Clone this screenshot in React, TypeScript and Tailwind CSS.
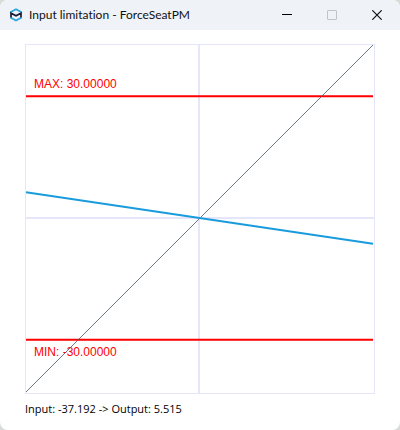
import { useState } from "react"

const LIMIT = 30
const RANGE = LIMIT / 0.7
const CENTER = 174

const toX = (value: number) => CENTER + (value / RANGE) * CENTER
const toY = (value: number) => CENTER - (value / RANGE) * CENTER

function AppLogo() {
  return (
    <svg viewBox="0 0 14 14" className="size-[14px] shrink-0" fill="none" aria-hidden="true">
      <path d="M1.8 4.4V4L7 1.2 12.2 4v.4" stroke="#2aa7df" strokeWidth="1.8" />
      <path d="M1.8 9.4v.4L7 12.6l5.2-2.8v-.4" stroke="#2aa7df" strokeWidth="1.8" />
      <path d="M2 9.6V5.2l5 2.6 5-2.6v4.4" stroke="#1c1c38" strokeWidth="1.7" />
    </svg>
  )
}

interface TitleBarProps {
  title: string
  onClose: () => void
}

function TitleBar({ title, onClose }: TitleBarProps) {
  return (
    <header className="flex h-[30px] items-center bg-[#eff3f8] pl-[9px]">
      <AppLogo />
      <h1 className="ml-1.5 flex-1 truncate font-['Lato',sans-serif] text-[12px] text-[#101010] [font-variant-ligatures:none]">
        {title}
      </h1>
      <button type="button" aria-label="Minimize" className="flex h-full w-[46px] items-center justify-center">
        <svg viewBox="0 0 10 10" className="size-[10px]" shapeRendering="crispEdges">
          <path d="M0 4.5h10" stroke="#000" />
        </svg>
      </button>
      <button type="button" aria-label="Maximize" disabled className="flex h-full w-[44px] items-center justify-center">
        <svg viewBox="0 0 10 10" className="size-[10px]" fill="none">
          <rect x="0.5" y="0.5" width="9" height="9" rx="0.5" stroke="#c0c3c7" />
        </svg>
      </button>
      <button
        type="button"
        aria-label="Close"
        onClick={onClose}
        className="flex h-full w-[46px] items-center justify-center"
      >
        <svg viewBox="0 0 10 10" className="size-[10px]">
          <path d="M0.3 0.3l9.4 9.4M9.7 0.3L0.3 9.7" stroke="#111" strokeWidth="1.2" />
        </svg>
      </button>
    </header>
  )
}

interface LimitChartProps {
  input: number
  output: number
}

function LimitChart({ input, output }: LimitChartProps) {
  const slope = output / input

  return (
    <svg
      viewBox="0 0 350 350"
      className="block w-full font-['Liberation_Sans',Arial,sans-serif] text-[12px]"
      role="img"
      aria-label="Input to output curve"
    >
      <rect x="0.5" y="0.5" width="349" height="349" fill="#fff" stroke="#e6e6fa" />

      {/* Axes */}
      <path d="M174 1v348M1 174h348" stroke="#e6e6fa" strokeWidth="2" />

      {/* Limits */}
      <path d={`M1 ${toY(LIMIT)}H348M1 ${toY(-LIMIT)}H348`} stroke="#ff0000" strokeWidth="2" />
      <text x="9" y="44" fill="#ff0000">
        MAX: {LIMIT.toFixed(5)}
      </text>
      <text x="9" y="312" fill="#ff0000">
        MIN: {(-LIMIT).toFixed(5)}
      </text>

      {/* Identity line */}
      <path d="M1 348L348 1" stroke="#4a5666" strokeWidth="0.8" />

      {/* Output curve */}
      <path
        d={`M1 ${toY(-RANGE * slope)}L${toX(RANGE)} ${toY(RANGE * slope)}`}
        stroke="#1a9bdc"
        strokeWidth="2"
      />
    </svg>
  )
}

export default function App() {
  const [open, setOpen] = useState(true)
  const input = -37.192
  const output = 5.515

  if (!open) return null

  return (
    <div className="min-h-screen bg-[#d8dcd8]">
      <div className="flex min-h-screen flex-col overflow-hidden rounded-lg bg-white">
        <TitleBar title="Input limitation - ForceSeatPM" onClose={() => setOpen(false)} />
        <main className="px-[25px] pt-[14px]">
          <LimitChart input={input} output={output} />
          <p className="mt-[7px] font-['Open_Sans',sans-serif] text-[11px] leading-4 text-black">
            Input: {input.toFixed(3)} -&gt; Output: {output.toFixed(3)}
          </p>
        </main>
      </div>
    </div>
  )
}
